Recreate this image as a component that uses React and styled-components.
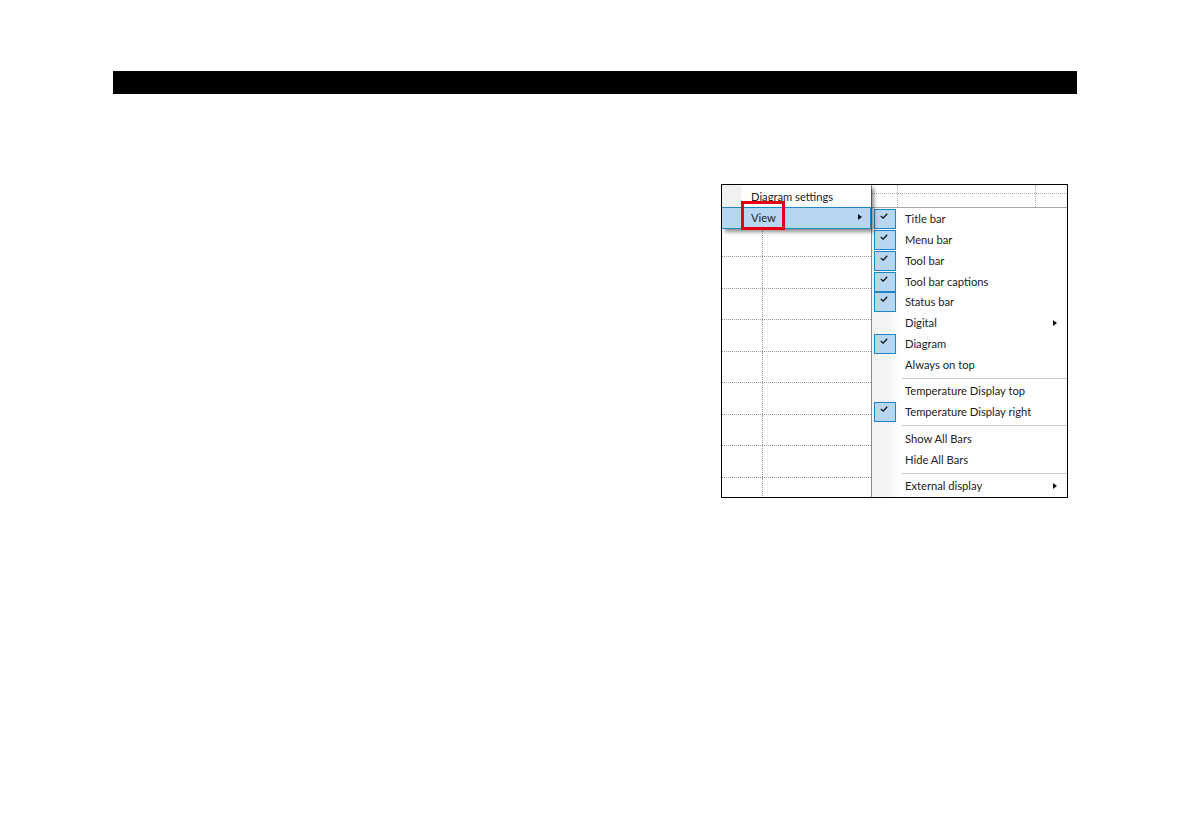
import React from 'react';
import styled, { createGlobalStyle } from 'styled-components';

const GlobalStyle = createGlobalStyle`
  html, body {
    margin: 0;
    padding: 0;
    background: #fff;
    font-family: 'Lato', 'Noto Sans', 'Liberation Sans', sans-serif;
  }
`;

const Page = styled.div`
  width: 1191px;
  height: 839px;
  padding: 71px 0 0 113px;
  box-sizing: border-box;
  overflow: hidden;
`;

const HeaderBar = styled.div`
  width: 964px;
  height: 23px;
  background: #000;
`;

const Frame = styled.div`
  position: relative;
  display: flex;
  box-sizing: border-box;
  width: 347px;
  height: 314px;
  margin: 90px 0 0 608px;
  border: 1px solid #000;
  background: #fff;
  overflow: hidden;
`;

const GridPane = styled.div`
  flex: 0 0 149px;
  display: flex;
  flex-direction: column;
  border-right: 1px solid #8a8a8a;
`;

const GridRow = styled.div`
  flex: 0 0 ${(p) => p.$h}px;
  display: flex;
  box-sizing: border-box;
  border-bottom: ${(p) => (p.$last ? 'none' : '1px dotted #999')};
`;

const GridCell = styled.div`
  flex: 0 0 40px;
  border-right: 1px dotted #999;
`;

const MenuPane = styled.div`
  flex: 1;
  display: flex;
  flex-direction: column;
  min-width: 0;
`;

const TopStrip = styled.div`
  flex: 0 0 23px;
  box-sizing: border-box;
  display: flex;
  flex-direction: column;
  border-bottom: 1px solid #a8a8a8;
`;

const StripRow = styled.div`
  flex: 0 0 ${(p) => p.$h}px;
  box-sizing: border-box;
  display: flex;
  border-bottom: ${(p) => (p.$line ? '1px dotted #aaa' : 'none')};
`;

const StripCell = styled.div`
  flex: 0 0 ${(p) => p.$w}px;
  border-right: 1px dotted #aaa;
`;

const MenuList = styled.div`
  flex: 1;
  display: flex;
  flex-direction: column;
  padding-top: 0.4px;
  background: linear-gradient(to right, #f4f4f4 0, #f4f4f4 17px, #fafafa 22px, #fff 28px);
`;

const MenuRow = styled.div`
  flex: 0 0 20.9px;
  display: flex;
  align-items: center;
  padding-left: 2px;
  color: #222;
  font-size: 11.2px;
  line-height: 20px;
`;

const CheckSlot = styled.div`
  flex: 0 0 22px;
  height: 20px;
  box-sizing: border-box;
  margin-right: 9px;
  display: flex;
  justify-content: center;
  padding: 3px 2px 0 0;
  ${(p) =>
    p.$checked &&
    `
    background: #b6d6f2;
    border: 1px solid #1c86c6;
  `}
`;

const RowLabel = styled.span`
  flex: 1;
  white-space: nowrap;
`;

const Arrow = styled.span`
  width: 0;
  height: 0;
  margin-right: ${(p) => p.$mr}px;
  border-left: 4px solid #111;
  border-top: 3.5px solid transparent;
  border-bottom: 3.5px solid transparent;
`;

const Separator = styled.div`
  flex: 0 0 5.5px;
  box-sizing: border-box;
  margin-left: 30px;
  padding-top: 2.5px;

  &::after {
    content: '';
    display: block;
    height: 1px;
    background: #c8c8c8;
  }
`;

const PopupMenu = styled.div`
  position: absolute;
  top: 0;
  left: 0;
  width: 149px;
  background: #fff;
  box-shadow: 3px 3px 4px rgba(0, 0, 0, 0.45);
  color: #222;
  font-size: 11.2px;
`;

const PopupRow = styled.div`
  height: 22px;
  box-sizing: border-box;
  display: flex;
  align-items: center;
  padding-left: 29px;
  background: linear-gradient(to right, #f1f1f1 0, #f1f1f1 19px, #fff 20px);
`;

const PopupActiveRow = styled(PopupRow)`
  padding-bottom: 2px;
  background: #b6d6f2;
  border: 1px solid #1c86c6;
  border-left: none;
`;

const Highlight = styled.div`
  position: absolute;
  top: 16px;
  left: 19px;
  width: 44px;
  height: 29px;
  box-sizing: border-box;
  border: 3px solid #e6000f;
`;

const Tick = () => (
  <svg width="8" height="7" viewBox="0 0 8 7">
    <path d="M0.8 3 L3.2 5.2 L7.2 0.8" fill="none" stroke="#111" strokeWidth="1.3" />
  </svg>
);

const gridRows = [
  { h: 9 },
  { h: 31.5 },
  { h: 31.5 },
  { h: 31.5 },
  { h: 31.5 },
  { h: 31.5 },
  { h: 31.5 },
  { h: 31.5 },
  { h: 31.5 },
  { h: 31.5 },
  { h: 20, last: true },
];

const menuGroups = [
  [
    { label: 'Title bar', checked: true },
    { label: 'Menu bar', checked: true },
    { label: 'Tool bar', checked: true },
    { label: 'Tool bar captions', checked: true },
    { label: 'Status bar', checked: true },
    { label: 'Digital', arrow: true },
    { label: 'Diagram', checked: true },
    { label: 'Always on top' },
  ],
  [
    { label: 'Temperature Display top' },
    { label: 'Temperature Display right', checked: true },
  ],
  [{ label: 'Show All Bars' }, { label: 'Hide All Bars' }],
  [{ label: 'External display', arrow: true }],
];

export default function App() {
  return (
    <Page>
      <GlobalStyle />
      <HeaderBar />
      <Frame>
        <GridPane>
          {gridRows.map((row, i) => (
            <GridRow key={i} $h={row.h} $last={row.last}>
              <GridCell />
            </GridRow>
          ))}
        </GridPane>
        <MenuPane>
          <TopStrip>
            <StripRow $h={9} $line>
              <StripCell $w={25} />
              <StripCell $w={137} />
            </StripRow>
            <StripRow $h={13}>
              <StripCell $w={25} />
              <StripCell $w={137} />
            </StripRow>
          </TopStrip>
          <MenuList>
            {menuGroups.map((group, g) => (
              <React.Fragment key={g}>
                {g > 0 && <Separator />}
                {group.map((item) => (
                  <MenuRow key={item.label}>
                    <CheckSlot $checked={item.checked}>{item.checked && <Tick />}</CheckSlot>
                    <RowLabel>{item.label}</RowLabel>
                    {item.arrow && <Arrow $mr={10} />}
                  </MenuRow>
                ))}
              </React.Fragment>
            ))}
          </MenuList>
        </MenuPane>
        <PopupMenu>
          <PopupRow>Diagram settings</PopupRow>
          <PopupActiveRow>
            <RowLabel>View</RowLabel>
            <Arrow $mr={8} />
          </PopupActiveRow>
        </PopupMenu>
        <Highlight />
      </Frame>
    </Page>
  );
}
